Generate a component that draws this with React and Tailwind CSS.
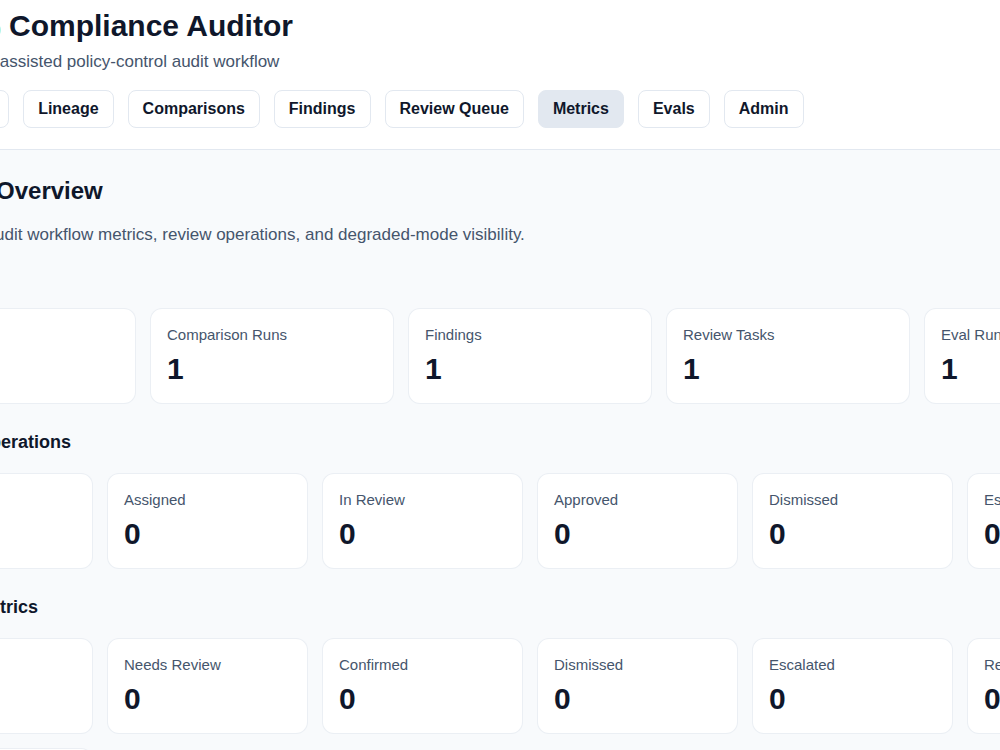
import React from "react";

const navItems = ["Documents", "Lineage", "Comparisons", "Findings", "Review Queue", "Metrics", "Evals", "Admin"];

const summary = [
  ["Documents", "3"],
  ["Comparison Runs", "1"],
  ["Findings", "1"],
  ["Review Tasks", "1"],
  ["Eval Runs", "1"],
];

const reviewOps = [
  ["Pending", "1"],
  ["Assigned", "0"],
  ["In Review", "0"],
  ["Approved", "0"],
  ["Dismissed", "0"],
  ["Escalated", "0"],
];

const findingMetrics = [
  ["Open", "1"],
  ["Needs Review", "0"],
  ["Confirmed", "0"],
  ["Dismissed", "0"],
  ["Escalated", "0"],
  ["Resolved", "0"],
  ["Degraded Mode", "0"],
];

function StatCard({ label, value }) {
  return (
    <div className="rounded-xl border border-slate-200/70 bg-white p-4">
      <div className="text-[15px] leading-5 text-slate-600">{label}</div>
      <div className="mt-1.5 text-3xl font-bold leading-9 text-slate-900">{value}</div>
    </div>
  );
}

function Section({ title, items, cols, first, titleClass }) {
  return (
    <section className={first ? "mt-4" : "mt-6"}>
      <h3 className={`text-lg font-bold leading-7 text-slate-900 ${titleClass || ""}`}>{title}</h3>
      <div className={`mt-[17px] grid gap-3.5 ${cols}`}>
        {items.map(([l, v]) => (
          <StatCard key={l} label={l} value={v} />
        ))}
      </div>
    </section>
  );
}

export default function App() {
  return (
    <div className="h-[750px] w-full overflow-hidden bg-slate-50 font-['Liberation_Sans',Arial,sans-serif]">
      <header className="border-b border-slate-200 bg-white">
        <div className="-ml-[108px] w-[1276px] pb-[21px] pt-2">
          <h1 className="ml-[81px] flex items-center gap-2 text-3xl font-bold leading-9 text-slate-900">
            <svg className="mt-2 h-7 w-7 shrink-0" viewBox="0 0 28 28">
              <circle cx="14" cy="14" r="13.5" fill="#5eead4" />
              <path d="M9 14.5l3.5 3.5L19 11" stroke="#0f766e" strokeWidth="2.5" fill="none" strokeLinecap="round" strokeLinejoin="round" />
            </svg>
            <span>Compliance Auditor</span>
          </h1>
          <p className="ml-[86px] mt-1.5 text-[17px] leading-6 text-slate-600">AI-assisted policy-control audit workflow</p>
          <nav className="mt-4 flex gap-3.5">
            {navItems.map((n) => (
              <button
                key={n}
                className={
                  n === "Metrics"
                    ? "rounded-lg border border-slate-200 bg-slate-200 px-3.5 py-1.5 text-base font-bold leading-6 text-slate-900"
                    : "rounded-lg border border-slate-200 bg-white px-3.5 py-1.5 text-base font-bold leading-6 text-slate-900"
                }
              >
                {n}
              </button>
            ))}
          </nav>
        </div>
      </header>
      <main className="-ml-[108px] w-[1276px] pt-[25px]">
        <h2 className="text-2xl font-bold leading-8 text-slate-900">Platform Overview</h2>
        <p className="-ml-[15px] mt-4 text-[17px] leading-6 text-slate-600">
          Platform-wide audit workflow metrics, review operations, and degraded-mode visibility.
        </p>
        <Section first title="Summary" items={summary} cols="grid-cols-5" />
        <Section title="Reviewer Operations" items={reviewOps} cols="grid-cols-6" />
        <Section title="Findings Metrics" titleClass="ml-[3px]" items={findingMetrics} cols="grid-cols-6" />
      </main>
    </div>
  );
}
